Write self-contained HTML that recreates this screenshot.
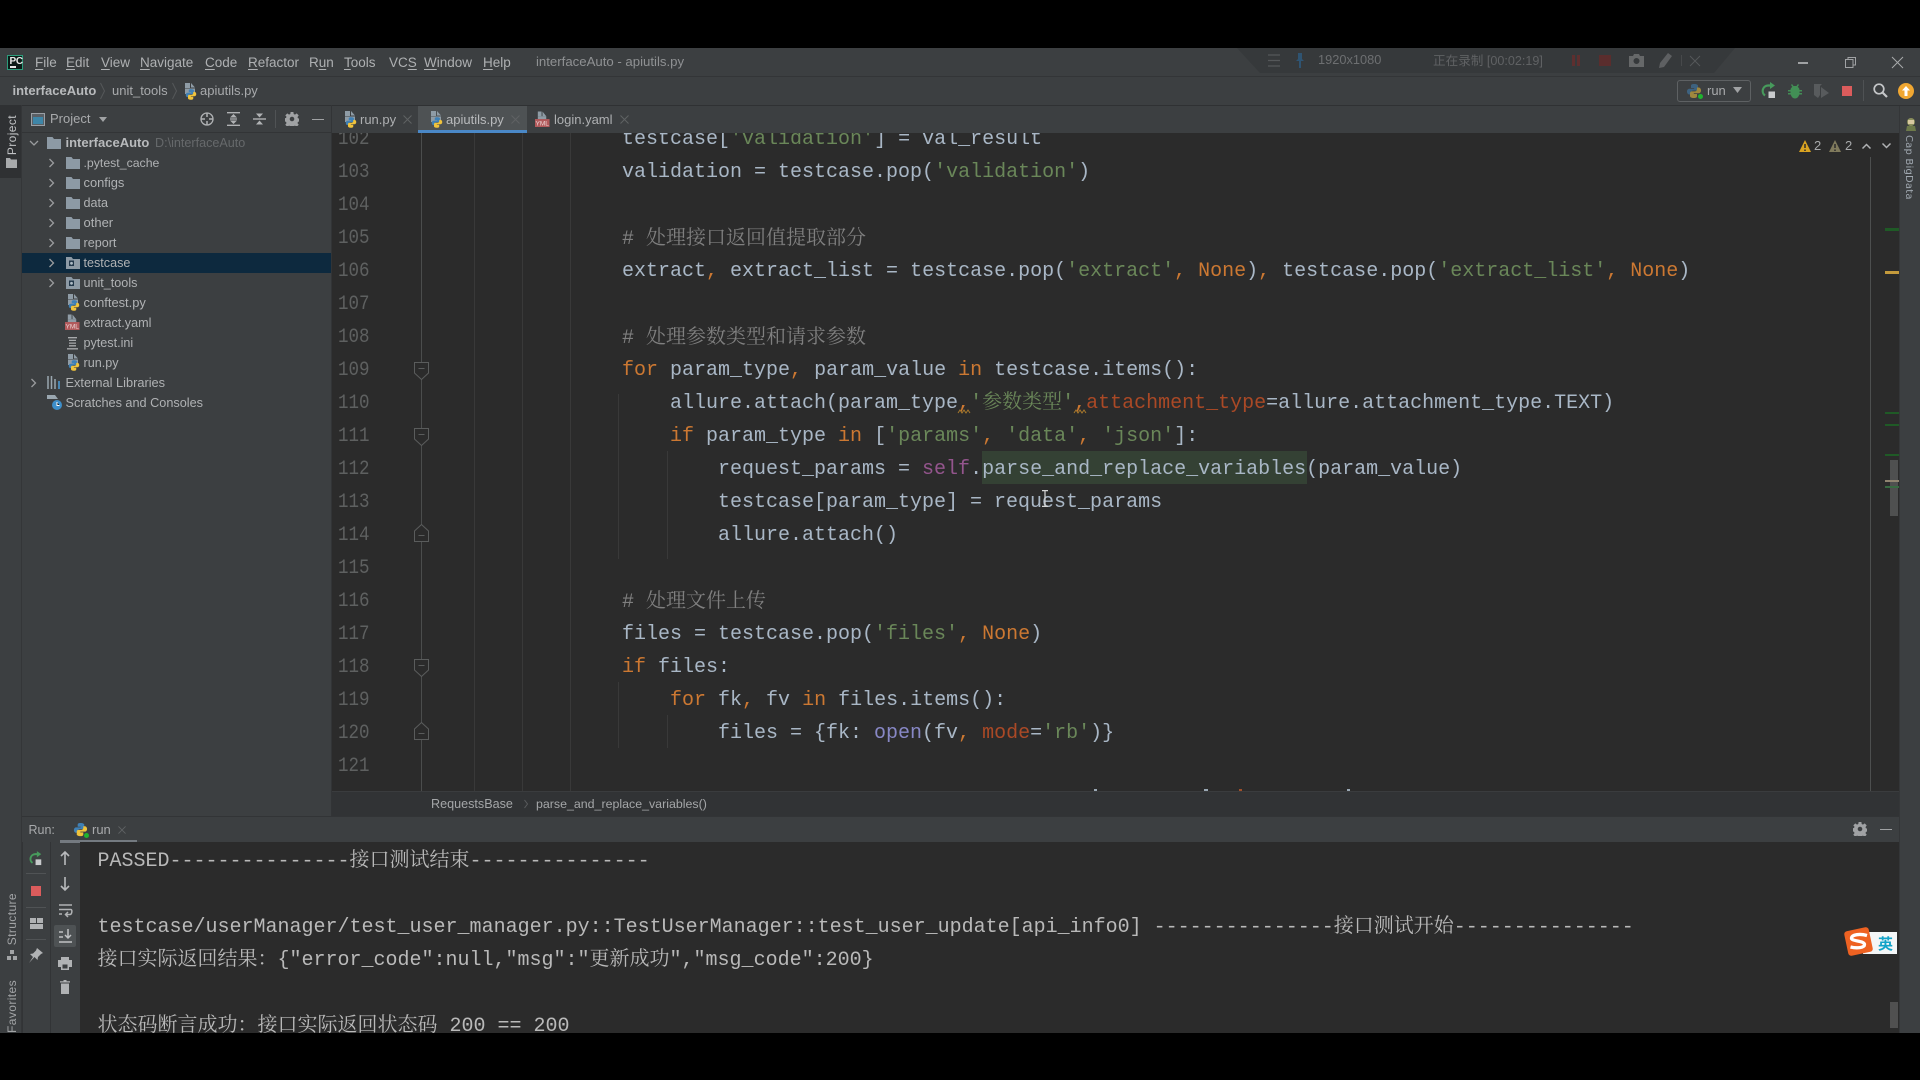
<!DOCTYPE html>
<html lang="zh-CN"><head><meta charset="utf-8"><title>interfaceAuto - apiutils.py</title>
<style>
html,body{margin:0;padding:0;background:#000;width:1920px;height:1080px;overflow:hidden}
#p{position:relative;width:1920px;height:1080px;background:#000;overflow:hidden;font-family:"Liberation Sans","Noto Sans CJK SC",sans-serif;color:#b3b5b7;filter:blur(.35px)}
.r{position:absolute}
.t{position:absolute;white-space:pre;line-height:20px;font-size:13px}
.m{font-size:13.5px;top:52.5px;color:#aeb0b2}
.tr{font-size:12.6px;color:#b0b2b4}
.clip{position:absolute;left:0;top:0;width:1920px}
.c{position:absolute;white-space:pre;line-height:33px;font-size:20px;margin-top:1.5px;font-family:"Liberation Mono","Noto Serif CJK SC",monospace;color:#a9b7c6}
.n{position:absolute;white-space:pre;line-height:33px;font-size:20px;margin-top:1.5px;left:337.5px;font-family:"Liberation Mono",monospace;color:#5e6060;transform:scaleX(.875);transform-origin:left}
.k{color:#cc7832}.s{color:#6a8759}.g{color:#7f7f7f}.f{color:#94558d}.b{color:#8888c6}.a{color:#aa4926}
.g.c{margin-top:2px}
.con{color:#b9b9b9;margin-top:1.2px}
.v{position:absolute;writing-mode:vertical-rl;white-space:pre;font-size:12px;line-height:14px;letter-spacing:.4px}
svg{position:absolute;overflow:visible}
.gd{position:absolute;width:1px;background:#393939}
.mk{position:absolute;left:1885px;width:14px;height:3px}
u{text-underline-offset:2px}
</style></head><body><div id="p">
<svg width="0" height="0" style="position:absolute"><defs>
<symbol id="logo" viewBox="0 0 16 16" overflow="visible"><path fill="#3f80b5" d="M8 1C5 1 5 2.2 5 3v2h3.2v.7H3.500C2 5.700 1 6.800 1 8.500s1 3 2.500 3H5V9.800c0-1.200 1-2.200 2.200-2.200h3c1 0 1.800-.8 1.800-1.800V3c0-1-1-2-4-2z"/><path fill="#f0c33c" transform="rotate(180 8 8)" d="M8 1C5 1 5 2.200 5 3v2h3.200v.7H3.500C2 5.700 1 6.800 1 8.500s1 3 2.500 3H5V9.800c0-1.200 1-2.200 2.200-2.200h3c1 0 1.800-.8 1.800-1.800V3c0-1-1-2-4-2z"/></symbol>
<symbol id="py" viewBox="0 0 14 17" overflow="visible"><path fill="#8f9ca6" d="M2 0h5v5H2zM8 0l4 4.500H8z"/><path fill="#8f9ca6" d="M2 5.500h10V11H2z"/><use href="#logo" x="2" y="5.500" width="12" height="12"/></symbol>
<symbol id="yml" viewBox="0 0 16 17" overflow="visible"><path fill="#8f9ca6" d="M3 0h4v5H3zM8 0l4 5H8z"/><path fill="#8f9ca6" d="M3 5h9v3H3z"/><rect x="0" y="8" width="15.500" height="8.500" fill="#b25a5c"/><text x="7.700" y="15" font-size="7" text-anchor="middle" fill="#ecd6d6" font-family="Liberation Sans">YML</text></symbol>
<symbol id="fo" viewBox="0 0 14 12"><path fill="#8d9aa5" d="M0 0h5.500l1.500 2h7v10H0z"/></symbol>
<symbol id="fs" viewBox="0 0 14 12"><path fill="#8d9aa5" d="M0 0h5.500l1.500 2h7v10H0z"/><rect x="3" y="3.500" width="5" height="5.500" fill="#23384a"/><circle cx="5.500" cy="6.300" r="1.400" fill="#aebbc5"/></symbol>
<symbol id="ar" viewBox="0 0 8 10"><path fill="none" stroke="#9a9c9e" stroke-width="1.300" d="M1.500 1l4 4-4 4"/></symbol>
<symbol id="fd" viewBox="0 0 15 18"><path fill="#2b2b2b" stroke="#5a5c5c" d="M.5.5h14V11l-7 6.500-7-6.500z"/><path stroke="#5a5c5c" d="M4.500 6.500h6"/></symbol>
<symbol id="fu" viewBox="0 0 15 18"><path fill="#2b2b2b" stroke="#5a5c5c" d="M.5 17.500h14V7L7.500.5.5 7z"/><path stroke="#5a5c5c" d="M4.500 11.500h6"/></symbol>
<symbol id="gear" viewBox="0 0 14 14"><path fill="#a0a2a4" fill-rule="evenodd" d="M5.600 0h2.800l.3 2 1.300.6L11.700 1.400l2 2-1.200 1.700.5 1.300 2 .3v2.800l-2 .3-.5 1.300 1.200 1.700-2 2-1.700-1.200-1.300.5-.3 2H5.600l-.3-2-1.300-.5-1.700 1.200-2-2 1.200-1.700-.5-1.300-2-.3V6.300l2-.3.5-1.300L.3 3.400l2-2L4 2.600l1.300-.6zM7 4.700a2.300 2.300 0 1 0 0 4.600 2.300 2.300 0 0 0 0-4.600z"/></symbol>
<symbol id="rerun" viewBox="0 0 16 17"><path fill="none" stroke="#479a5c" stroke-width="2.200" d="M9.500 3.500H7A5.500 5.500 0 0 0 4 13.500"/><path fill="#479a5c" d="M9 0l5 3.500L9 7z"/><rect x="7.500" y="9.500" width="6.500" height="6.500" fill="#c9cbcd"/></symbol>
<symbol id="x" viewBox="0 0 9 9"><path stroke="#5f6264" stroke-width="1" d="M.5.500l8 8M8.500.500l-8 8"/></symbol>
</defs></svg>

<!-- title bar -->
<div class="r" style="left:0;top:48px;width:1920px;height:985px;background:#3c3f41"></div>
<div class="r" style="left:0;top:76px;width:1920px;height:1px;background:#333537"></div>
<div class="r" style="left:0;top:105px;width:1920px;height:1px;background:#2f3133"></div>
<div class="r" style="left:7px;top:55px;width:14px;height:13px;background:#0c1a17;border:1.500px solid #2c9c7b"></div>
<div class="t" style="left:9.500px;top:52px;font-size:10px;font-weight:bold;color:#e8e8e8;letter-spacing:-.3px">PC</div>
<div class="r" style="left:10px;top:66px;width:6px;height:1.500px;background:#e8e8e8"></div>
<div class="t m" style="left:35px"><u>F</u>ile</div>
<div class="t m" style="left:66px"><u>E</u>dit</div>
<div class="t m" style="left:101px"><u>V</u>iew</div>
<div class="t m" style="left:140px"><u>N</u>avigate</div>
<div class="t m" style="left:205px"><u>C</u>ode</div>
<div class="t m" style="left:248px"><u>R</u>efactor</div>
<div class="t m" style="left:309px">R<u>u</u>n</div>
<div class="t m" style="left:344px"><u>T</u>ools</div>
<div class="t m" style="left:389px">VC<u>S</u></div>
<div class="t m" style="left:424px"><u>W</u>indow</div>
<div class="t m" style="left:483px"><u>H</u>elp</div>
<div class="t" style="left:536px;top:51.500px;font-size:13.200px;color:#8f9193">interfaceAuto - apiutils.py</div>

<!-- recording overlay -->
<svg style="left:0;top:0" width="1920" height="80"><path d="M1237 48H1735L1714 73H1260z" fill="#36393b"/></svg>
<svg style="left:1268px;top:54px" width="12" height="13"><path stroke="#55585a" stroke-width="1.200" d="M0 1h12M0 6.500h12M0 12h12"/></svg>
<svg style="left:1295px;top:53px" width="10" height="15"><path fill="#2f5472" d="M3 0h4v6l2 2H6v7H4V8H1l2-2z"/></svg>
<div class="t" style="left:1318px;top:50px;font-size:12.800px;color:#6d6f71">1920x1080</div>
<div class="t" style="left:1433px;top:50.500px;font-size:12.600px;color:#606264">正在录制 [00:02:19]</div>
<div class="r" style="left:1572px;top:55px;width:3px;height:11px;background:#5e2f2f"></div>
<div class="r" style="left:1577px;top:55px;width:3px;height:11px;background:#5e2f2f"></div>
<div class="r" style="left:1599px;top:55px;width:12px;height:11px;background:#5a2d2d"></div>
<svg style="left:1629px;top:54px" width="15" height="13"><path fill="#666869" fill-rule="evenodd" d="M0 2h4l1-2h5l1 2h4v11H0zM7.500 4a3 3 0 1 0 0 6 3 3 0 0 0 0-6z"/></svg>
<svg style="left:1658px;top:53px" width="14" height="15"><path fill="#5e6062" d="M10 0l4 3-8 11-5 1 1-5z"/></svg>
<div class="r" style="left:1681px;top:55px;width:1px;height:11px;background:#47494b"></div>
<svg style="left:1690px;top:56px" width="10" height="10"><path stroke="#55585a" d="M0 0l10 10M10 0L0 10"/></svg>
<div class="r" style="left:1798px;top:62px;width:10px;height:1.500px;background:#a0a2a4"></div>
<svg style="left:1845px;top:57px" width="11" height="11"><path fill="none" stroke="#a0a2a4" d="M.5 2.500h7.500v8H.5zM3 2.500V.5h7.500V8H8"/></svg>
<svg style="left:1892px;top:57px" width="11" height="11"><path stroke="#a8aaac" d="M0 0l11 11M11 0L0 11"/></svg>

<!-- nav bar -->
<div class="t" style="left:12.500px;top:80.500px;font-size:13px;font-weight:bold;color:#b8babc">interfaceAuto</div>
<svg style="left:100px;top:83px" width="5" height="16"><path fill="none" stroke="#55585a" d="M.5 0L4.500 8 .5 16"/></svg>
<div class="t" style="left:112px;top:80.500px;font-size:13px;color:#a8aaac">unit_tools</div>
<svg style="left:172px;top:83px" width="5" height="16"><path fill="none" stroke="#55585a" d="M.5 0L4.500 8 .5 16"/></svg>
<svg style="left:183px;top:83px" width="14" height="17"><use href="#py"/></svg>
<div class="t" style="left:200px;top:80.500px;font-size:13px;color:#a8aaac">apiutils.py</div>
<div class="r" style="left:1677px;top:80px;width:72px;height:20px;border:1px solid #5e6163;border-radius:3px"></div>
<svg style="left:1686px;top:83px" width="16" height="16" opacity=".55"><use href="#logo"/></svg>
<div class="r" style="left:1698px;top:94px;width:5px;height:5px;border-radius:50%;background:#1fb32f"></div>
<div class="t" style="left:1707px;top:81px;font-size:13px;color:#a8aaac">run</div>
<svg style="left:1733px;top:87px" width="9" height="6"><path fill="#a0a2a4" d="M0 0h9L4.500 6z"/></svg>
<svg style="left:1761px;top:82px" width="16" height="17"><use href="#rerun"/></svg>
<svg style="left:1787px;top:83px" width="16" height="16"><path fill="#428f55" d="M5 1l1.500 2h3L11 1l1 1-1.300 1.800C12 5 12.500 6 12.500 7H15v1.500h-2.500V10H15v1.500h-2.700C11.500 14 10 15.500 8 15.500S4.500 14 3.700 11.500H1V10h2.500V8.500H1V7h2.500c0-1 .5-2 1.800-3.200L4 2z"/></svg>
<svg style="left:1814px;top:83px" width="15" height="16"><path fill="#585b5d" d="M0 1h8L6 3v9l-2 3-4-3zM7 4l8 6-8 5z"/></svg>
<div class="r" style="left:1842px;top:86px;width:10px;height:10px;background:#db5c5c"></div>
<div class="r" style="left:1863px;top:80px;width:1px;height:21px;background:#4f5254"></div>
<svg style="left:1873px;top:83px" width="15" height="15"><circle cx="6" cy="6" r="4.800" fill="none" stroke="#c4c6c8" stroke-width="1.700"/><path stroke="#c4c6c8" stroke-width="2.200" d="M9.500 9.500L14 14"/></svg>
<div class="r" style="left:1898px;top:83px;width:16px;height:16px;border-radius:50%;background:#f0a732"></div>
<svg style="left:1901px;top:86px" width="10" height="10"><path fill="#fff" d="M5 0l4 4.500H6.500V10h-3V4.500H1z"/></svg>

<!-- left stripe -->
<div class="r" style="left:21px;top:105px;width:1px;height:928px;background:#343638"></div>
<div class="r" style="left:0;top:106px;width:21px;height:72px;background:#2f3133"></div>
<div class="v" style="left:5px;top:115px;transform:rotate(180deg);color:#c0c2c4">Project</div>
<svg style="left:6px;top:158px" width="11" height="10"><path fill="#a8aaac" d="M0 0h4l1 1.500h6V10H0z"/></svg>
<div class="v" style="left:5px;top:893px;transform:rotate(180deg);color:#a2a4a6">Structure</div>
<svg style="left:7px;top:950px" width="10" height="10"><path fill="#a2a4a6" d="M3 0h4v4H3zM0 6h4v4H0zM6 6h4v4H6z"/></svg>
<div class="v" style="left:5px;top:980px;transform:rotate(180deg);color:#a2a4a6">Favorites</div>

<!-- project panel -->
<div class="r" style="left:22px;top:132px;width:309px;height:1px;background:#323436"></div>
<div class="r" style="left:31px;top:113px;width:14px;height:13px;background:#5a6066;box-sizing:border-box;border:1.500px solid #9aa0a6"></div>
<div class="r" style="left:33px;top:117px;width:10px;height:7px;background:#3e86a8"></div>
<div class="t" style="left:50px;top:109px;font-size:13px;color:#a8aaac">Project</div>
<svg style="left:99px;top:117px" width="8" height="5"><path fill="#a0a2a4" d="M0 0h8L4 5z"/></svg>
<svg style="left:200px;top:112px" width="14" height="14"><circle cx="7" cy="7" r="6" fill="none" stroke="#b0b2b4" stroke-width="1.300"/><path stroke="#b0b2b4" stroke-width="1.500" d="M7 1v4M7 9v4M1 7h4M9 7h4"/></svg>
<svg style="left:227px;top:112px" width="13" height="14"><path stroke="#b0b2b4" stroke-width="1.400" d="M0 .7h13M0 13.300h13"/><path fill="#b0b2b4" d="M6.500 2L10 5.500H3zM6.500 12L10 8.500H3z"/><path stroke="#b0b2b4" stroke-width="1.200" d="M3 7h7"/></svg>
<svg style="left:253px;top:112px" width="13" height="14"><path fill="#b0b2b4" d="M6.500 5.500L10 1.500H3zM6.500 8.500L10 12.500H3z"/><path stroke="#b0b2b4" stroke-width="1.400" d="M0 7h13"/></svg>
<div class="r" style="left:275px;top:110px;width:1px;height:18px;background:#505355"></div>
<svg style="left:285px;top:112px" width="14" height="14"><use href="#gear"/></svg>
<div class="r" style="left:312px;top:118.500px;width:12px;height:1.500px;background:#a0a2a4"></div>

<!-- tree -->
<div class="r" style="left:22px;top:253px;width:309px;height:20px;background:#0d293e"></div>
<svg style="left:28.500px;top:140px" width="10" height="7"><path fill="none" stroke="#9a9c9e" stroke-width="1.300" d="M1 1l4 4 4-4"/></svg>
<svg style="left:47px;top:136.500px" width="14" height="12"><use href="#fo"/></svg>
<div class="t tr" style="left:65.500px;top:132.700px;font-size:13px;font-weight:bold;color:#b8babc">interfaceAuto</div>
<div class="t tr" style="left:155px;top:132.700px;color:#66696b">D:\interfaceAuto</div>
<svg style="left:47.500px;top:157.700px" width="8" height="10"><use href="#ar"/></svg><svg style="left:65.500px;top:156.700px" width="14" height="12"><use href="#fo"/></svg><div class="t tr" style="left:83.500px;top:152.700px;font-size:12.300px">.pytest_cache</div>
<svg style="left:47.500px;top:177.700px" width="8" height="10"><use href="#ar"/></svg><svg style="left:65.500px;top:176.700px" width="14" height="12"><use href="#fo"/></svg><div class="t tr" style="left:83.500px;top:172.700px;font-size:12.900px">configs</div>
<svg style="left:47.500px;top:197.700px" width="8" height="10"><use href="#ar"/></svg><svg style="left:65.500px;top:196.700px" width="14" height="12"><use href="#fo"/></svg><div class="t tr" style="left:83.500px;top:192.700px">data</div>
<svg style="left:47.500px;top:217.700px" width="8" height="10"><use href="#ar"/></svg><svg style="left:65.500px;top:216.700px" width="14" height="12"><use href="#fo"/></svg><div class="t tr" style="left:83.500px;top:212.700px;font-size:13px">other</div>
<svg style="left:47.500px;top:237.700px" width="8" height="10"><use href="#ar"/></svg><svg style="left:65.500px;top:236.700px" width="14" height="12"><use href="#fo"/></svg><div class="t tr" style="left:83.500px;top:232.700px">report</div>
<svg style="left:47.500px;top:257.700px" width="8" height="10"><use href="#ar"/></svg><svg style="left:65.500px;top:256.700px" width="14" height="12"><use href="#fs"/></svg><div class="t tr" style="left:83.500px;top:252.700px">testcase</div>
<svg style="left:47.500px;top:277.700px" width="8" height="10"><use href="#ar"/></svg><svg style="left:65.500px;top:276.700px" width="14" height="12"><use href="#fs"/></svg><div class="t tr" style="left:83.500px;top:272.700px">unit_tools</div>
<svg style="left:66px;top:294px" width="14" height="17"><use href="#py"/></svg><div class="t tr" style="left:83.500px;top:292.700px;font-size:12.900px">conftest.py</div>
<svg style="left:65px;top:314px" width="15" height="17"><use href="#yml"/></svg><div class="t tr" style="left:83.500px;top:312.700px">extract.yaml</div>
<svg style="left:67px;top:337px" width="11" height="13"><path stroke="#a8aaac" stroke-width="1.300" d="M1 .7h9M2 3.400h7M2 6.100h7M2 8.800h7M0 11.800h11"/></svg><div class="t tr" style="left:83.500px;top:332.700px">pytest.ini</div>
<svg style="left:66px;top:354px" width="14" height="17"><use href="#py"/></svg><div class="t tr" style="left:83.500px;top:352.700px">run.py</div>
<svg style="left:29.500px;top:377.700px" width="8" height="10"><use href="#ar"/></svg>
<svg style="left:47px;top:376px" width="14" height="13"><path stroke="#9aa7b0" stroke-width="1.500" d="M1 0v13M4.500 0v13M8 3v10"/><path stroke="#4a8fc0" stroke-width="1.800" d="M12 5v8"/></svg>
<div class="t tr" style="left:65.500px;top:372.700px;font-size:12.800px">External Libraries</div>
<svg style="left:47px;top:395px" width="15" height="15"><path fill="#9aa7b0" d="M0 0h8l3 4H0z"/><circle cx="10" cy="10" r="5" fill="#3d8ec9"/><path stroke="#fff" d="M10 7v3.500h2.500"/></svg>
<div class="t tr" style="left:65.500px;top:392.700px;font-size:12.700px">Scratches and Consoles</div>

<!-- tab bar -->
<div class="r" style="left:331px;top:105px;width:1px;height:711px;background:#323436"></div>
<div class="r" style="left:418px;top:106px;width:109px;height:24px;background:#4e5254"></div>
<div class="r" style="left:418px;top:129.500px;width:109px;height:3px;background:#4a88c7"></div>
<svg style="left:343px;top:111px" width="14" height="17"><use href="#py"/></svg>
<div class="t" style="left:360px;top:109.500px;font-size:13px;color:#aeb0b2">run.py</div>
<svg style="left:403px;top:115px" width="9" height="9"><use href="#x"/></svg>
<svg style="left:429px;top:111px" width="14" height="17"><use href="#py"/></svg>
<div class="t" style="left:446px;top:109.500px;font-size:13px;color:#b8babc">apiutils.py</div>
<svg style="left:511px;top:115px" width="9" height="9"><use href="#x"/></svg>
<svg style="left:535px;top:111px" width="15" height="17"><use href="#yml"/></svg>
<div class="t" style="left:554px;top:109.500px;font-size:13px;color:#aeb0b2">login.yaml</div>
<svg style="left:620px;top:115px" width="9" height="9"><use href="#x"/></svg>

<!-- right stripe -->
<div class="r" style="left:1899px;top:106px;width:1px;height:927px;background:#343638"></div>
<svg style="left:1905px;top:118px" width="12" height="13"><circle cx="6" cy="4" r="4" fill="#8a8f5c"/><rect x="3" y="2" width="6" height="4" fill="#d8c9a0"/><path fill="#6d7a4a" d="M1 13l1-5h8l1 5z"/></svg>
<div class="v" style="left:1901px;top:135px;color:#a0a8b0;font-family:'DejaVu Sans',sans-serif;font-size:10px;letter-spacing:.2px">Cap BigData</div>

<!-- editor -->
<div class="r" style="left:332px;top:133px;width:1567px;height:658px;background:#2b2b2b"></div>
<div class="clip" style="height:791px;clip-path:inset(133px 0 0 0)">
<div class="r" style="left:982px;top:451px;width:325px;height:33px;background:#344134"></div>
<div class="r" style="left:421px;top:133px;width:1px;height:658px;background:#4b4d4d"></div>
<div class="gd" style="left:474px;top:133px;height:658px"></div>
<div class="gd" style="left:522px;top:133px;height:658px"></div>
<div class="gd" style="left:570px;top:133px;height:658px"></div>
<div class="gd" style="left:618px;top:394px;height:165px"></div>
<div class="gd" style="left:667px;top:451px;height:108px"></div>
<div class="gd" style="left:618px;top:682px;height:66px"></div>
<div class="gd" style="left:667px;top:715px;height:33px"></div>
<svg style="left:414px;top:362px" width="15" height="18"><use href="#fd"/></svg>
<svg style="left:414px;top:428px" width="15" height="18"><use href="#fd"/></svg>
<svg style="left:414px;top:524px" width="15" height="18"><use href="#fu"/></svg>
<svg style="left:414px;top:659px" width="15" height="18"><use href="#fd"/></svg>
<svg style="left:414px;top:722px" width="15" height="18"><use href="#fu"/></svg>
<div class="n" style="top:121.500px">102</div>
<div class="n" style="top:154.500px">103</div>
<div class="n" style="top:187.500px">104</div>
<div class="n" style="top:220.500px">105</div>
<div class="n" style="top:253.500px">106</div>
<div class="n" style="top:286.500px">107</div>
<div class="n" style="top:319.500px">108</div>
<div class="n" style="top:352.500px">109</div>
<div class="n" style="top:385.500px">110</div>
<div class="n" style="top:418.500px">111</div>
<div class="n" style="top:451.500px">112</div>
<div class="n" style="top:484.500px">113</div>
<div class="n" style="top:517.500px">114</div>
<div class="n" style="top:550.500px">115</div>
<div class="n" style="top:583.500px">116</div>
<div class="n" style="top:616.500px">117</div>
<div class="n" style="top:649.500px">118</div>
<div class="n" style="top:682.500px">119</div>
<div class="n" style="top:715.500px">120</div>
<div class="n" style="top:748.500px">121</div>
<div class="c" style="left:622px;top:121.500px">testcase[<span class="s">'validation'</span>] = val_result</div>
<div class="c" style="left:622px;top:154.500px">validation = testcase.pop(<span class="s">'validation'</span>)</div>
<div class="c g" style="left:622px;top:220.500px"># 处理接口返回值提取部分</div>
<div class="c" style="left:622px;top:253.500px">extract<span class="k">,</span> extract_list = testcase.pop(<span class="s">'extract'</span><span class="k">, None</span>)<span class="k">,</span> testcase.pop(<span class="s">'extract_list'</span><span class="k">, None</span>)</div>
<div class="c g" style="left:622px;top:319.500px"># 处理参数类型和请求参数</div>
<div class="c" style="left:622px;top:352.500px"><span class="k">for</span> param_type<span class="k">,</span> param_value <span class="k">in</span> testcase.items():</div>
<div class="c" style="left:670px;top:385.500px">allure.attach(param_type<span class="k">,</span><span class="s">'参数类型'</span><span class="k">,</span><span class="a">attachment_type</span>=allure.attachment_type.TEXT)</div>
<div class="c" style="left:670px;top:418.500px"><span class="k">if</span> param_type <span class="k">in</span> [<span class="s">'params'</span><span class="k">,</span> <span class="s">'data'</span><span class="k">,</span> <span class="s">'json'</span>]:</div>
<div class="c" style="left:718px;top:451.500px">request_params = <span class="f">self</span>.parse_and_replace_variables(param_value)</div>
<div class="c" style="left:718px;top:484.500px">testcase[param_type] = request_params</div>
<div class="c" style="left:718px;top:517.500px">allure.attach()</div>
<div class="c g" style="left:622px;top:583.500px"># 处理文件上传</div>
<div class="c" style="left:622px;top:616.500px">files = testcase.pop(<span class="s">'files'</span><span class="k">, None</span>)</div>
<div class="c" style="left:622px;top:649.500px"><span class="k">if</span> files:</div>
<div class="c" style="left:670px;top:682.500px"><span class="k">for</span> fk<span class="k">,</span> fv <span class="k">in</span> files.items():</div>
<div class="c" style="left:718px;top:715.500px">files = {fk: <span class="b">open</span>(fv<span class="k">, </span><span class="a">mode</span>=<span class="s">'rb'</span>)}</div>
<svg style="left:958px;top:409px" width="14" height="5"><path fill="none" stroke="#a8792c" d="M0 4l2-3 2 3 2-3 2 3 2-3 2 3"/></svg>
<svg style="left:1074px;top:409px" width="14" height="5"><path fill="none" stroke="#a8792c" d="M0 4l2-3 2 3 2-3 2 3 2-3 2 3"/></svg>
<div class="r" style="left:1094px;top:789px;width:3px;height:2px;background:#9aa8b4"></div>
<div class="r" style="left:1204px;top:788.500px;width:4px;height:2.500px;background:#9aa8b4"></div>
<div class="r" style="left:1239px;top:789px;width:3px;height:2px;background:#a04f2a"></div>
<div class="r" style="left:1347px;top:789px;width:3px;height:2px;background:#9aa8b4"></div>
<svg style="left:1041px;top:490px" width="8" height="17"><path fill="none" stroke="#d5d5d5" stroke-width="1.200" d="M1 .6h6M4 .6v15.800M1 16.400h6"/></svg>
</div>
<svg style="left:1799px;top:140px" width="12" height="12"><path fill="#d9a321" d="M6 0l6 12H0z"/><path stroke="#2b2b2b" stroke-width="1.500" d="M6 4v4M6 9.500v1.500"/></svg>
<div class="t" style="left:1814px;top:136px;font-size:13px;color:#a8aaac">2</div>
<svg style="left:1829px;top:140px" width="12" height="12"><path fill="#807a5c" d="M6 0l6 12H0z"/><path stroke="#2b2b2b" stroke-width="1.500" d="M6 4v4M6 9.500v1.500"/></svg>
<div class="t" style="left:1845px;top:136px;font-size:13px;color:#a8aaac">2</div>
<svg style="left:1862px;top:143px" width="9" height="6"><path fill="none" stroke="#b0b2b4" stroke-width="1.500" d="M.5 5.500l4-4 4 4"/></svg>
<svg style="left:1882px;top:143px" width="9" height="6"><path fill="none" stroke="#b0b2b4" stroke-width="1.500" d="M.5.500l4 4 4-4"/></svg>
<div class="r" style="left:1870px;top:157px;width:1px;height:634px;background:#4d4f4f"></div>
<div class="mk" style="top:228px;background:#1f5a26"></div>
<div class="mk" style="top:270.500px;background:#c49a3c"></div>
<div class="mk" style="top:411.500px;height:2px;background:#1f5a26"></div>
<div class="mk" style="top:424px;height:2px;background:#1f5a26"></div>
<div class="mk" style="top:454px;height:2px;background:#1f5a26"></div>
<div class="r" style="left:1890px;top:460px;width:8px;height:56px;background:#4f5050"></div>
<div class="mk" style="top:480px;height:2px;background:#8f8470"></div>
<div class="mk" style="top:486px;height:2px;background:#386b42"></div>

<!-- breadcrumb -->
<div class="r" style="left:332px;top:791px;width:1567px;height:25px;background:#313335;border-top:1px solid #3a3c3e;box-sizing:border-box"></div>
<div class="t" style="left:431px;top:794px;font-size:12.600px;color:#a4a6a8">RequestsBase</div>
<svg style="left:524px;top:800px" width="4" height="8"><path fill="none" stroke="#5a5c5e" d="M.5 0l3 4-3 4"/></svg>
<div class="t" style="left:536px;top:794px;font-size:12.400px;color:#a4a6a8">parse_and_replace_variables()</div>

<!-- run panel -->
<div class="r" style="left:22px;top:816px;width:1877px;height:26px;background:#3c3f41;border-top:1px solid #323436;box-sizing:border-box"></div>
<div class="t" style="left:28.500px;top:820px;font-size:12.500px;color:#a8aaac">Run:</div>
<svg style="left:72.500px;top:822px" width="15" height="15"><use href="#logo"/></svg>
<div class="r" style="left:84px;top:833px;width:5px;height:5px;border-radius:50%;background:#1fb32f"></div>
<div class="t" style="left:92px;top:820px;font-size:13px;color:#a8aaac">run</div>
<svg style="left:118px;top:826px" width="8" height="8"><use href="#x"/></svg>
<div class="r" style="left:60px;top:840px;width:77px;height:3px;background:#747a80"></div>
<svg style="left:1853px;top:822px" width="14" height="14"><use href="#gear"/></svg>
<div class="r" style="left:1880px;top:828.500px;width:12px;height:1.500px;background:#a0a2a4"></div>
<div class="r" style="left:22px;top:842px;width:1px;height:191px;background:#323436"></div>
<div class="r" style="left:50px;top:842px;width:1px;height:191px;background:#323436"></div>
<div class="r" style="left:80px;top:842px;width:1819px;height:191px;background:#2b2b2b"></div>
<svg style="left:29px;top:851px" width="14" height="15"><use href="#rerun"/></svg>
<div class="r" style="left:26px;top:873px;width:20px;height:1px;background:#505355"></div>
<div class="r" style="left:31px;top:885.500px;width:10px;height:10px;background:#db5c5c"></div>
<div class="r" style="left:26px;top:907px;width:20px;height:1px;background:#505355"></div>
<svg style="left:30px;top:918px" width="13" height="11"><path fill="#b0b2b4" d="M0 0h6v5H0zM7 0h6v5H7zM0 6h13v5H0z"/></svg>
<div class="r" style="left:26px;top:939px;width:20px;height:1px;background:#505355"></div>
<svg style="left:29px;top:948px" width="14" height="15"><path fill="#b0b2b4" d="M8 0l6 5-2 1-3 3-.5 3-3-3L0 15l4-6-3-3 3-.5 3-3z"/></svg>
<svg style="left:60px;top:851px" width="10" height="14"><path fill="none" stroke="#b8babc" stroke-width="1.600" d="M5 14V1M1 5l4-4 4 4"/></svg>
<svg style="left:60px;top:877px" width="10" height="14"><path fill="none" stroke="#b8babc" stroke-width="1.600" d="M5 0v13M1 9l4 4 4-4"/></svg>
<svg style="left:59px;top:904px" width="13" height="13"><path fill="none" stroke="#b0b2b4" stroke-width="1.500" d="M0 1h13M0 5.500h12c1.500 0 1 5-1 5H7M9 8l-2.500 2.500L9 13M0 10h3"/></svg>
<div class="r" style="left:54px;top:925px;width:22px;height:22px;background:#4e5254;border-radius:2px"></div>
<svg style="left:59px;top:929px" width="13" height="14"><path fill="none" stroke="#c0c2c4" stroke-width="1.500" d="M0 13h13M0 3h4M0 8h4M9 0v9M6 6l3 3 3-3"/></svg>
<svg style="left:58px;top:957px" width="14" height="13"><path fill="#b0b2b4" fill-rule="evenodd" d="M3 0h8v3h3v7h-3v3H3v-3H0V3h3zM4.500 7.500V11.500h5V7.500z"/></svg>
<svg style="left:60px;top:980px" width="10" height="14"><path fill="#b0b2b4" d="M3.500 0h3v1.200H10v1.300H0V1.200h3.500zM1 3.500h8V14H1z"/></svg>

<!-- console -->
<div class="clip" style="height:1033px;clip-path:inset(842px 0 0 0)">
<div class="c con" style="left:97.500px;top:843.500px">PASSED---------------接口测试结束---------------</div>
<div class="c con" style="left:97.500px;top:909.500px">testcase/userManager/test_user_manager.py::TestUserManager::test_user_update[api_info0] ---------------接口测试开始---------------</div>
<div class="c con" style="left:97.500px;top:942.500px">接口实际返回结果：{"error_code":null,"msg":"更新成功","msg_code":200}</div>
<div class="c con" style="left:97.500px;top:1008.500px">状态码断言成功：接口实际返回状态码 200 == 200</div>
</div>
<div class="r" style="left:1890px;top:1002px;width:8px;height:26px;background:#505050"></div>

<!-- IME -->
<div class="r" style="left:1863px;top:932px;width:34px;height:22px;background:#f4f6f7"></div>
<div class="t" style="left:1878px;top:932.500px;font-size:15px;font-weight:bold;color:#12a3c8;font-family:'Noto Sans CJK SC',sans-serif;line-height:22px">英</div>
<div class="r" style="left:1846px;top:929px;width:25px;height:25px;background:#ee6222;border-radius:3px;transform:rotate(-12deg)"></div>
<svg style="left:1848px;top:932px" width="21" height="19"><path fill="none" stroke="#fff" stroke-width="3.300" d="M19 3.500C12 1.500 4 2.500 3.500 6c-.5 3.500 13 2.500 13 6.500 0 3.500-8 4-14 2.500"/></svg>

<!-- black bars -->
<div class="r" style="left:0;top:0;width:1920px;height:48px;background:#000"></div>
<div class="r" style="left:0;top:1033px;width:1920px;height:47px;background:#000"></div>
</div></body></html>
